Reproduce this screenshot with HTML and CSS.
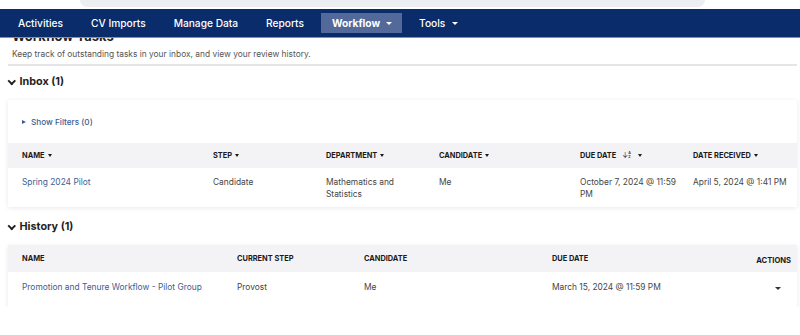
FILE: index.html
```html
<!DOCTYPE html>
<html lang="en">
<head>
    <meta charset="UTF-8">
    <meta name="viewport" content="width=device-width, initial-scale=1.0">
    <title>Workflow Tasks</title>
    <link rel="stylesheet" href="styles.css">
</head>
<body>

    <div class="topbar">
        <div class="search-strip">
            <div class="search-pill"></div>
        </div>
        <nav class="main-nav">
            <a class="nav-item">Activities</a>
            <a class="nav-item">CV Imports</a>
            <a class="nav-item">Manage Data</a>
            <a class="nav-item">Reports</a>
            <a class="nav-item active">Workflow <span class="caret"></span></a>
            <a class="nav-item">Tools <span class="caret"></span></a>
        </nav>
    </div>

    <main class="page">
        <h1 class="page-title">Workflow Tasks</h1>
        <p class="page-desc">Keep track of outstanding tasks in your inbox, and view your review history.</p>
        <div class="divider"></div>

        <!-- Inbox -->
        <h2 class="section-title"><span class="chevron"></span>Inbox (1)</h2>
        <div class="card">
            <div class="filters">
                <a class="filter-link"><span class="tri-right"></span>Show Filters (0)</a>
            </div>
            <div class="table inbox-table">
                <div class="row head">
                    <div>NAME <span class="sort-caret"></span></div>
                    <div>STEP <span class="sort-caret"></span></div>
                    <div>DEPARTMENT <span class="sort-caret"></span></div>
                    <div>CANDIDATE <span class="sort-caret"></span></div>
                    <div>DUE DATE <span class="az"><span class="az-arrow">↓</span><span class="az-letters"><i>A</i><i>Z</i></span></span> <span class="sort-caret"></span></div>
                    <div>DATE RECEIVED <span class="sort-caret"></span></div>
                </div>
                <div class="row body">
                    <div><a class="link">Spring 2024 Pilot</a></div>
                    <div>Candidate</div>
                    <div>Mathematics and<br>Statistics</div>
                    <div>Me</div>
                    <div>October 7, 2024 @ 11:59<br>PM</div>
                    <div>April 5, 2024 @ 1:41 PM</div>
                </div>
            </div>
        </div>

        <!-- History -->
        <h2 class="section-title history-title"><span class="chevron"></span>History (1)</h2>
        <div class="card">
            <div class="table history-table">
                <div class="row head">
                    <div>NAME</div>
                    <div>CURRENT STEP</div>
                    <div>CANDIDATE</div>
                    <div>DUE DATE</div>
                    <div class="actions">ACTIONS</div>
                </div>
                <div class="row body">
                    <div><a class="link">Promotion and Tenure Workflow - Pilot Group</a></div>
                    <div>Provost</div>
                    <div>Me</div>
                    <div>March 15, 2024 @ 11:59 PM</div>
                    <div class="actions"><span class="action-caret"></span></div>
                </div>
            </div>
        </div>
    </main>

</body>
</html>
```

FILE: styles.css
```css
:root {
    --navy: #0a2c6b;
    --navy-active: #52699a;
    --link: #3d5d91;
    --text: #454545;
    --heading: #1f1f1f;
    --head-bg: #f3f3f5;
    --line: #e5e5e7;
}

* {
    box-sizing: border-box;
    margin: 0;
    padding: 0;
}

body {
    font-family: 'Inter', 'Liberation Sans', sans-serif;
    background: #ffffff;
    color: var(--text);
    overflow: hidden;
}

/* top bar */

.topbar {
    position: relative;
    z-index: 2;
}

.search-strip {
    height: 9px;
    background: #ffffff;
    padding: 0 95px 2px 80px;
}

.search-pill {
    height: 7px;
    background: #eceef2;
    border-radius: 0 0 12px 12px;
}

.main-nav {
    height: 29px;
    background: var(--navy);
    border-bottom: 1px solid #7d90b8;
    display: flex;
    align-items: center;
    padding-left: 7px;
    gap: 6px;
}

.nav-item {
    color: #ffffff;
    font-size: 10.2px;
    font-weight: 500;
    padding: 0 11px;
    height: 20px;
    display: flex;
    align-items: center;
    gap: 6px;
}

.nav-item.active {
    background: var(--navy-active);
    font-weight: 700;
    padding: 0 10px 0 11px;
    gap: 5px;
}

.caret {
    width: 0;
    height: 0;
    border-left: 3px solid transparent;
    border-right: 3px solid transparent;
    border-top: 3.5px solid #ffffff;
    margin-left: 1px;
}

/* page */

.page {
    margin-top: -10px;
    padding: 0 3px 0 8px;
}

.page-title {
    font-size: 13px;
    line-height: 16px;
    font-weight: 700;
    color: var(--heading);
    padding-left: 4px;
}

.page-desc {
    font-size: 8.4px;
    line-height: 12px;
    margin-top: 4px;
    padding-left: 4px;
    color: #555555;
}

.divider {
    height: 2px;
    background: var(--line);
    margin-top: 4px;
}

.section-title {
    font-size: 10.8px;
    line-height: 14px;
    font-weight: 700;
    color: var(--heading);
    margin-top: 9px;
    display: flex;
    align-items: center;
}

.history-title {
    margin-top: 13px;
}

.chevron {
    width: 5.5px;
    height: 5.5px;
    border-right: 2px solid var(--heading);
    border-bottom: 2px solid var(--heading);
    transform: rotate(45deg);
    margin: -3px 5px 0 1px;
}

.card {
    margin-top: 11px;
    background: #ffffff;
    box-shadow: 0 1px 5px rgba(0, 0, 0, 0.09);
}

.filters {
    height: 43px;
    display: flex;
    align-items: center;
    padding-left: 14px;
}

.filter-link {
    color: var(--link);
    font-size: 8.2px;
    font-weight: 500;
    display: flex;
    align-items: center;
}

.tri-right {
    width: 0;
    height: 0;
    border-top: 2.5px solid transparent;
    border-bottom: 2.5px solid transparent;
    border-left: 4px solid var(--link);
    margin-right: 5px;
}

/* tables */

.row {
    display: grid;
    padding-left: 14px;
}

.inbox-table .row {
    grid-template-columns: 191px 113px 113px 141px 113px 1fr;
}

.history-table .row {
    grid-template-columns: 215px 127px 188px 1fr auto;
    padding-right: 6px;
}

.row.head {
    background: var(--head-bg);
    font-size: 7.4px;
    font-weight: 700;
    color: #1a1a1a;
    height: 25px;
    align-items: center;
}

.history-table .row.head {
    height: 27px;
}

.row.head > div {
    display: flex;
    align-items: center;
    gap: 3px;
}

.row.body {
    font-size: 8.4px;
    line-height: 12px;
    padding-top: 8px;
    padding-bottom: 7px;
}

.history-table .row.body {
    padding-top: 9px;
    padding-bottom: 14px;
}

.link {
    color: var(--link);
}

.sort-caret {
    width: 0;
    height: 0;
    border-left: 2.5px solid transparent;
    border-right: 2.5px solid transparent;
    border-top: 3px solid #1a1a1a;
}

.az {
    display: inline-flex;
    align-items: center;
    margin: 0 4px 0 3px;
    color: #333333;
}

.az-arrow {
    font-size: 7px;
    font-weight: 400;
}

.az-letters {
    display: flex;
    flex-direction: column;
    font-size: 3.5px;
    line-height: 3.5px;
}

.az-letters i {
    font-style: normal;
}

.actions {
    justify-content: flex-end;
    text-align: right;
    display: flex;
}

.row.head .actions {
    margin-top: 4px;
    font-size: 7.6px;
}

.action-caret {
    width: 0;
    height: 0;
    border-left: 3.5px solid transparent;
    border-right: 3.5px solid transparent;
    border-top: 3.5px solid #333333;
    margin: 6px 10px 0 0;
}
```
